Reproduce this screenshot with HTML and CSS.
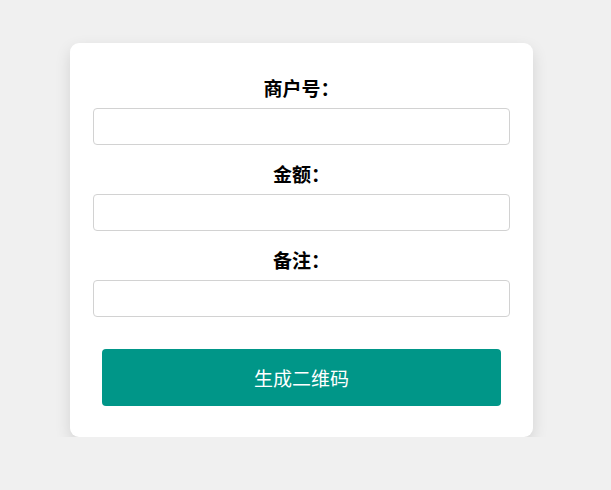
FILE: index.html
```html
<!DOCTYPE html>
<html lang="zh">
<head>
<meta charset="utf-8">
<title>生成二维码</title>
<link rel="stylesheet" href="styles.css">
</head>
<body>
<div class="page">
  <form class="card">
    <div class="group">
      <label class="label" for="mch">商户号：</label>
      <input class="field" id="mch" type="text">
    </div>
    <div class="group">
      <label class="label" for="amt">金额：</label>
      <input class="field" id="amt" type="text">
    </div>
    <div class="group">
      <label class="label" for="note">备注：</label>
      <input class="field" id="note" type="text">
    </div>
    <button class="btn" type="button">生成二维码</button>
  </form>
</div>
</body>
</html>
```

FILE: styles.css
```css
html, body {
  margin: 0;
  padding: 0;
  background: #f0f0f0;
  font-family: "Noto Sans CJK SC", "Noto Sans", sans-serif;
}
.page {
  padding: 43px 0 0 70px;
}
.card {
  box-sizing: border-box;
  width: 463px;
  background: #ffffff;
  border-radius: 9px;
  box-shadow: 0 6px 16px rgba(0, 0, 0, 0.12);
  padding: 31px 23px 31px;
  display: flex;
  flex-direction: column;
}
.group {
  display: flex;
  flex-direction: column;
  margin-bottom: 15px;
}
.group:last-of-type {
  margin-bottom: 32px;
}
.label {
  text-align: center;
  font-size: 19px;
  font-weight: 700;
  line-height: 27px;
  color: #000;
  margin-bottom: 7px;
}
.field {
  box-sizing: border-box;
  height: 37px;
  width: 100%;
  border: 1px solid #d2d2d2;
  border-radius: 4px;
  background: #fff;
  padding: 0 10px;
  font-size: 16px;
  font-family: inherit;
  outline: none;
}
.btn {
  box-sizing: border-box;
  margin: 0 9px;
  height: 57px;
  background: #009688;
  color: #fff;
  border: none;
  border-radius: 4px;
  font-size: 19px;
  font-family: inherit;
  cursor: pointer;
}
```
